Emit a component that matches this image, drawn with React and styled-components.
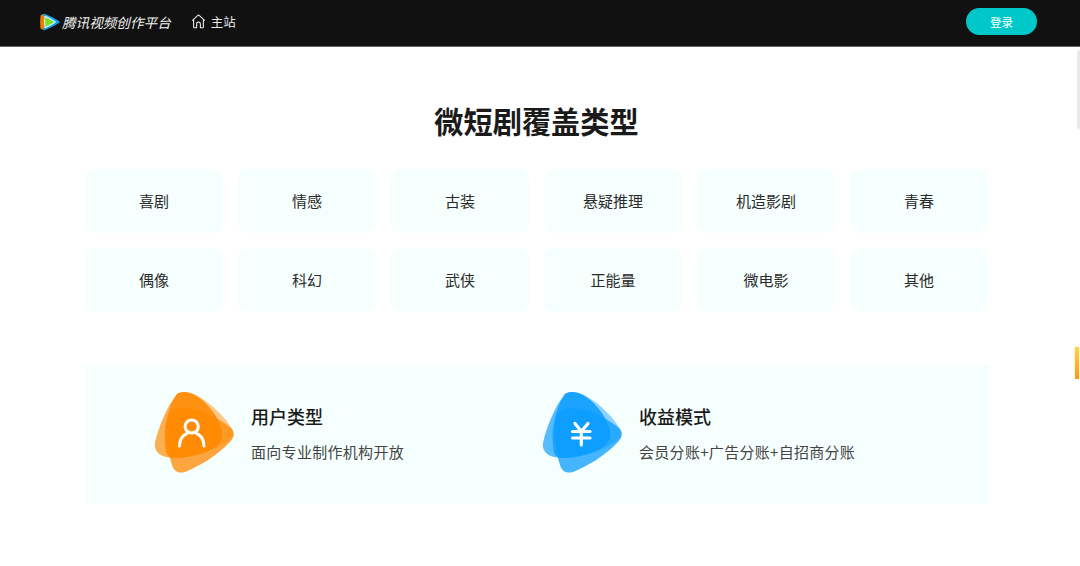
import React from "react";
import styled, { createGlobalStyle } from "styled-components";

const types = ["喜剧", "情感", "古装", "悬疑推理", "机造影剧", "青春", "偶像", "科幻", "武侠", "正能量", "微电影", "其他"];

const GlobalStyle = createGlobalStyle`
  html, body {
    margin: 0;
    height: 100%;
    overflow: hidden;
    background: #fff;
    font-family: "Noto Sans CJK SC", "Noto Sans", sans-serif;
  }
`;

const Page = styled.div`
  position: relative;
  height: 566px;
  overflow: hidden;
`;

const Header = styled.header`
  display: flex;
  align-items: center;
  height: 47px;
  padding: 0 43px 3px 40px;
  box-sizing: border-box;
  background: #111;
  border-bottom: 1px solid #666;
`;

const Brand = styled.div`
  display: flex;
  align-items: center;
  gap: 2px;
  color: #f2f2f2;
  font-size: 13.6px;
  font-style: italic;
  white-space: nowrap;
`;

const HomeLink = styled.a`
  display: flex;
  align-items: center;
  gap: 5px;
  margin-left: 20px;
  color: #e8e8e8;
  font-size: 12.5px;
`;

const LoginButton = styled.button`
  width: 71px;
  height: 27px;
  margin-left: auto;
  padding: 0;
  border: 0;
  border-radius: 14px;
  background: #00c8c8;
  color: #fff;
  font-family: inherit;
  font-size: 11.5px;
`;

const Main = styled.main`
  width: 903px;
  margin-left: 85px;
`;

const Title = styled.h1`
  margin: 0;
  padding-top: 53px;
  height: 69px;
  color: #1a1a1a;
  font-size: 29.2px;
  font-weight: 700;
  line-height: 40px;
  text-align: center;
  box-sizing: content-box;
`;

const TypeGrid = styled.div`
  display: grid;
  grid-template-columns: repeat(6, 1fr);
  grid-auto-rows: 64px;
  gap: 15px;
`;

const TypeTile = styled.div`
  display: flex;
  align-items: center;
  justify-content: center;
  padding-bottom: 2px;
  box-sizing: border-box;
  border-radius: 10px;
  background: #f5fffd;
  color: #2a2a2a;
  font-size: 15px;
`;

const InfoPanel = styled.section`
  display: grid;
  grid-template-columns: 388px 1fr;
  align-items: center;
  height: 139px;
  margin-top: 53px;
  padding: 0 0 3px 69px;
  box-sizing: border-box;
  background: #f5fffd;
`;

const InfoItem = styled.div`
  display: flex;
  align-items: center;
  gap: 17px;
`;

const InfoText = styled.div`
  display: flex;
  flex-direction: column;
  gap: 12px;
`;

const InfoTitle = styled.div`
  color: #1a1a1a;
  font-size: 18px;
  font-weight: 500;
  line-height: 25px;
`;

const InfoDesc = styled.div`
  color: #444;
  font-size: 15px;
  letter-spacing: 0.3px;
  line-height: 22px;
`;

const ScrollThumb = styled.div`
  position: absolute;
  top: 50px;
  right: 0;
  width: 3px;
  height: 79px;
  border-radius: 2px 0 0 2px;
  background: #e9e9e9;
`;

const SideMarker = styled.div`
  position: absolute;
  top: 347px;
  right: 1px;
  width: 4px;
  height: 32px;
  background: linear-gradient(#ffd24a, #ff9a10);
  box-shadow: 0 0 3px rgba(255, 190, 60, 0.4);
`;

const Logo = () => (
  <svg width="20" height="18" viewBox="0 0 20 18">
    <path d="M3 1.2 Q1.6 9 3 16.8 Q3.4 17.8 5 17 Q13 13.8 19 10 Q20.4 9 19 8 Q13 4 5 1 Q3.4 .3 3 1.2Z" fill="#12a0f0" />
    <path d="M2.6 1.6 Q.9 1.3 .5 3 Q-.2 9 .5 15 Q.9 16.7 2.6 16.4 Q5 15 5 9 Q5 3 2.6 1.6Z" fill="#f07a00" />
    <path d="M4.4 3.4 Q3.6 9 4.4 14.6 Q4.8 15.6 6.2 15 Q11 12.6 15.4 9.8 Q16.3 9 15.4 8.2 Q11 5.4 6.2 3 Q4.8 2.4 4.4 3.4Z" fill="#c8f4ff" />
    <path d="M5.4 5 Q4.9 9 5.4 13 Q5.7 13.8 6.6 13.3 Q10 11.6 13.2 9.7 Q14 9 13.2 8.3 Q10 6.4 6.6 4.7 Q5.7 4.2 5.4 5Z" fill="#7ee01e" />
  </svg>
);

const HomeIcon = () => (
  <svg width="15" height="15" viewBox="0 0 15 15" fill="none" stroke="#e8e8e8" strokeWidth="1.1" strokeLinejoin="round">
    <path d="M1.2 6.6 6.6 1.6a1.3 1.3 0 0 1 1.8 0l5.4 5" />
    <path d="M2.6 5.6V13a.8.8 0 0 0 .8.8h2.2V10a1.9 1.9 0 0 1 3.8 0v3.8h2.2a.8.8 0 0 0 .8-.8V5.6" />
  </svg>
);

// overlapping rounded triangles, the overlap in the middle reads as solid
const Blob = ({ color, children }) => (
  <svg width="80" height="82" viewBox="0 0 80 82">
    <path d="M23 2C30 -2 38 1 44 4C58 12 72 26 78 37C81 43 79 46 74 49C60 60 36 66 20 66C13 66 11 60 11 52C9 34 15 14 23 2Z" fill={color} opacity=".45" />
    <path d="M23 2C30 -2 38 1 44 5C56 13 66 28 68 40C69 48 65 53 58 57C44 64 26 67 12 65C4 63 0 58 1 51C4 36 13 14 23 2Z" fill={color} opacity=".68" />
    <path d="M23 2C30 -2 38 1 44 5C56 13 66 28 68 40C69 48 65 53 58 57C44 64 30 66 20 66C13 66 11 60 11 52C9 34 15 14 23 2Z" fill={color} opacity=".6" />
    <path d="M14 26C16 19 24 15 34 16C50 18 68 28 78 37C81 41 80 46 76 50C64 63 46 74 31 80C24 82 20 79 18 73C13 58 11 40 14 26Z" fill={color} opacity=".75" />
    {children}
  </svg>
);

const PersonGlyph = () => (
  <g fill="none" stroke="#fff" strokeWidth="3" strokeLinecap="round">
    <circle cx="37.7" cy="34.5" r="6.6" />
    <path d="M25.5 54 Q26 44 33 41.5 M50 54 Q49.5 44 42.5 41.5" />
  </g>
);

const YenGlyph = () => (
  <g fill="none" stroke="#fff" strokeWidth="3.2" strokeLinecap="round" strokeLinejoin="round">
    <path d="M33 31.5 39.3 39.5 46 31.5 M30.5 39.5H48 M30.5 46H48 M39.3 39.5V53" />
  </g>
);

const App = () => (
  <Page>
    <GlobalStyle />
    <Header>
      <Brand>
        <Logo />
        腾讯视频创作平台
      </Brand>
      <HomeLink>
        <HomeIcon />
        主站
      </HomeLink>
      <LoginButton>登录</LoginButton>
    </Header>
    <Main>
      <Title>微短剧覆盖类型</Title>
      <TypeGrid>
        {types.map((t) => (
          <TypeTile key={t}>{t}</TypeTile>
        ))}
      </TypeGrid>
      <InfoPanel>
        <InfoItem>
          <Blob color="#ff8800">
            <PersonGlyph />
          </Blob>
          <InfoText>
            <InfoTitle>用户类型</InfoTitle>
            <InfoDesc>面向专业制作机构开放</InfoDesc>
          </InfoText>
        </InfoItem>
        <InfoItem>
          <Blob color="#0a9cff">
            <YenGlyph />
          </Blob>
          <InfoText>
            <InfoTitle>收益模式</InfoTitle>
            <InfoDesc>会员分账+广告分账+自招商分账</InfoDesc>
          </InfoText>
        </InfoItem>
      </InfoPanel>
    </Main>
    <ScrollThumb />
    <SideMarker />
  </Page>
);

export default App;
